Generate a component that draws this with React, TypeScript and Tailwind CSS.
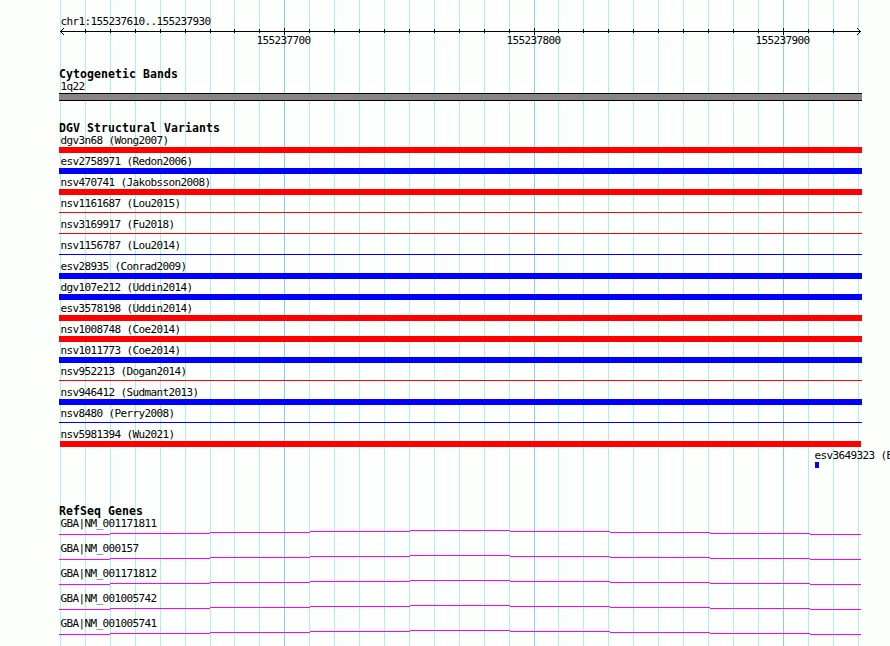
import React from 'react';

const minorLines = [
  60, 85, 110, 135, 160, 185, 210, 234, 259, 309, 334, 359, 384, 409, 434, 459,
  484, 509, 558, 583, 608, 633, 658, 683, 708, 733, 758, 808, 833, 858,
];

const majorLines = [
  { x: 284, label: "155237700" },
  { x: 534, label: "155237800" },
  { x: 783, label: "155237900" },
];

const variants = [
  { name: "dgv3n68 (Wong2007)", bar: "ml-[59px] h-1.5 w-[803px] bg-[#ff0000]" },
  { name: "esv2758971 (Redon2006)", bar: "ml-[59px] h-1.5 w-[803px] bg-[#0000ff]" },
  { name: "nsv470741 (Jakobsson2008)", bar: "ml-[59px] h-1.5 w-[803px] bg-[#ff0000]" },
  { name: "nsv1161687 (Lou2015)", bar: "ml-[59px] mt-0.5 h-px w-[803px] bg-[#ff0000]" },
  { name: "nsv3169917 (Fu2018)", bar: "ml-[59px] mt-0.5 h-px w-[803px] bg-[#ff0000]" },
  { name: "nsv1156787 (Lou2014)", bar: "ml-[59px] mt-0.5 h-px w-[803px] bg-[#0000ff]" },
  { name: "esv28935 (Conrad2009)", bar: "ml-[59px] h-1.5 w-[803px] bg-[#0000ff]" },
  { name: "dgv107e212 (Uddin2014)", bar: "ml-[59px] h-1.5 w-[803px] bg-[#0000ff]" },
  { name: "esv3578198 (Uddin2014)", bar: "ml-[59px] h-1.5 w-[803px] bg-[#ff0000]" },
  { name: "nsv1008748 (Coe2014)", bar: "ml-[59px] h-1.5 w-[803px] bg-[#ff0000]" },
  { name: "nsv1011773 (Coe2014)", bar: "ml-[59px] h-1.5 w-[803px] bg-[#0000ff]" },
  { name: "nsv952213 (Dogan2014)", bar: "ml-[59px] mt-0.5 h-px w-[803px] bg-[#ff0000]" },
  { name: "nsv946412 (Sudmant2013)", bar: "ml-[59px] h-1.5 w-[803px] bg-[#0000ff]" },
  { name: "nsv8480 (Perry2008)", bar: "ml-[59px] mt-0.5 h-px w-[803px] bg-[#0000ff]" },
  { name: "nsv5981394 (Wu2021)", bar: "ml-[60px] h-1.5 w-[801px] bg-[#ff0000]" },
];

const genes = [
  "GBA|NM_001171811",
  "GBA|NM_000157",
  "GBA|NM_001171812",
  "GBA|NM_001005742",
  "GBA|NM_001005741",
];

// intron line, stepped one pixel at a time up to the middle and back down
const intron = [
  { x: 0, w: 51, y: 4 },
  { x: 51, w: 100, y: 3 },
  { x: 151, w: 100, y: 2 },
  { x: 251, w: 100, y: 1 },
  { x: 351, w: 100, y: 0 },
  { x: 451, w: 100, y: 1 },
  { x: 551, w: 100, y: 2 },
  { x: 651, w: 100, y: 3 },
  { x: 751, w: 51, y: 4 },
];

function GridLines() {
  return (
    <svg className="absolute inset-0" width="890" height="646" shapeRendering="crispEdges">
      {minorLines.map((x) => (
        <rect key={x} x={x} y="0" width="1" height="646" fill="#afeeee" />
      ))}
      {majorLines.map(({ x }) => (
        <rect key={x} x={x} y="0" width="1" height="646" fill="#87ceeb" />
      ))}
    </svg>
  );
}

function Ruler() {
  return (
    <svg className="block h-[38px] w-[890px]" viewBox="0 0 890 38">
      <g shapeRendering="crispEdges">
        <rect x="60" y="3" width="801" height="1" />
        {minorLines.slice(1, -1).map((x) => (
          <rect key={x} x={x} y="1" width="1" height="4" />
        ))}
        {majorLines.map(({ x }) => (
          <rect key={x} x={x} y="0" width="1" height="7" />
        ))}
        <path d="M61 2h1v1h-1zM62 1h1v1h-1zM63 0h1v1h-1zM61 4h1v1h-1zM62 5h1v1h-1zM63 6h1v1h-1z" />
        <path d="M859 2h1v1h-1zM858 1h1v1h-1zM857 0h1v1h-1zM859 4h1v1h-1zM858 5h1v1h-1zM857 6h1v1h-1z" />
      </g>
      {majorLines.map(({ x, label }) => (
        <text key={x} x={x - 27.6} y="16">{label}</text>
      ))}
    </svg>
  );
}

function Heading({ children }: { children: React.ReactNode }) {
  return (
    <h2 className="h-3 pl-[59px] text-[11.5px] font-bold leading-[17px] tracking-[0.077px]">
      {children}
    </h2>
  );
}

function Label({ children }: { children: React.ReactNode }) {
  return <div className="h-[15px] pl-[60.4px] leading-[17px]">{children}</div>;
}

export default function App() {
  return (
    <div className="relative h-[646px] w-[890px] overflow-hidden whitespace-pre bg-[#fdfffc] font-['DejaVu_Sans_Mono','Liberation_Mono',monospace] text-[11px] tracking-[-0.622px] text-black">
      <GridLines />
      <div className="relative">
        <div className="pt-[13px]">
          <Label>chr1:155237610..155237930</Label>
          <Ruler />
        </div>

        {/* Cytogenetic bands */}
        <section className="h-[54px]">
          <Heading>Cytogenetic Bands</Heading>
          <Label>1q22</Label>
          <div className="ml-[59px] h-2 w-[803px] border-y border-black bg-[#888488]" />
        </section>

        {/* Structural variants */}
        <section className="h-[383px]">
          <Heading>DGV Structural Variants</Heading>
          {variants.map((v) => (
            <div key={v.name} className="flex h-[21px] flex-col">
              <Label>{v.name}</Label>
              <div className={`shrink-0 ${v.bar}`} />
            </div>
          ))}
          <div className="ml-[754px]">
            <Label>esv3649323 (Bentley2008)</Label>
            <div className="ml-[61px] h-1.5 w-1 bg-[#0000ff]" />
          </div>
        </section>

        {/* RefSeq genes */}
        <section>
          <Heading>RefSeq Genes</Heading>
          {genes.map((gene) => (
            <div key={gene} className="h-[25px]">
              <Label>{gene}</Label>
              <svg className="ml-[59px] block" width="802" height="5" shapeRendering="crispEdges">
                {intron.map((s) => (
                  <rect key={s.x} x={s.x} y={s.y} width={s.w} height="1" fill="#ff00ff" />
                ))}
              </svg>
            </div>
          ))}
        </section>
      </div>
    </div>
  );
}
